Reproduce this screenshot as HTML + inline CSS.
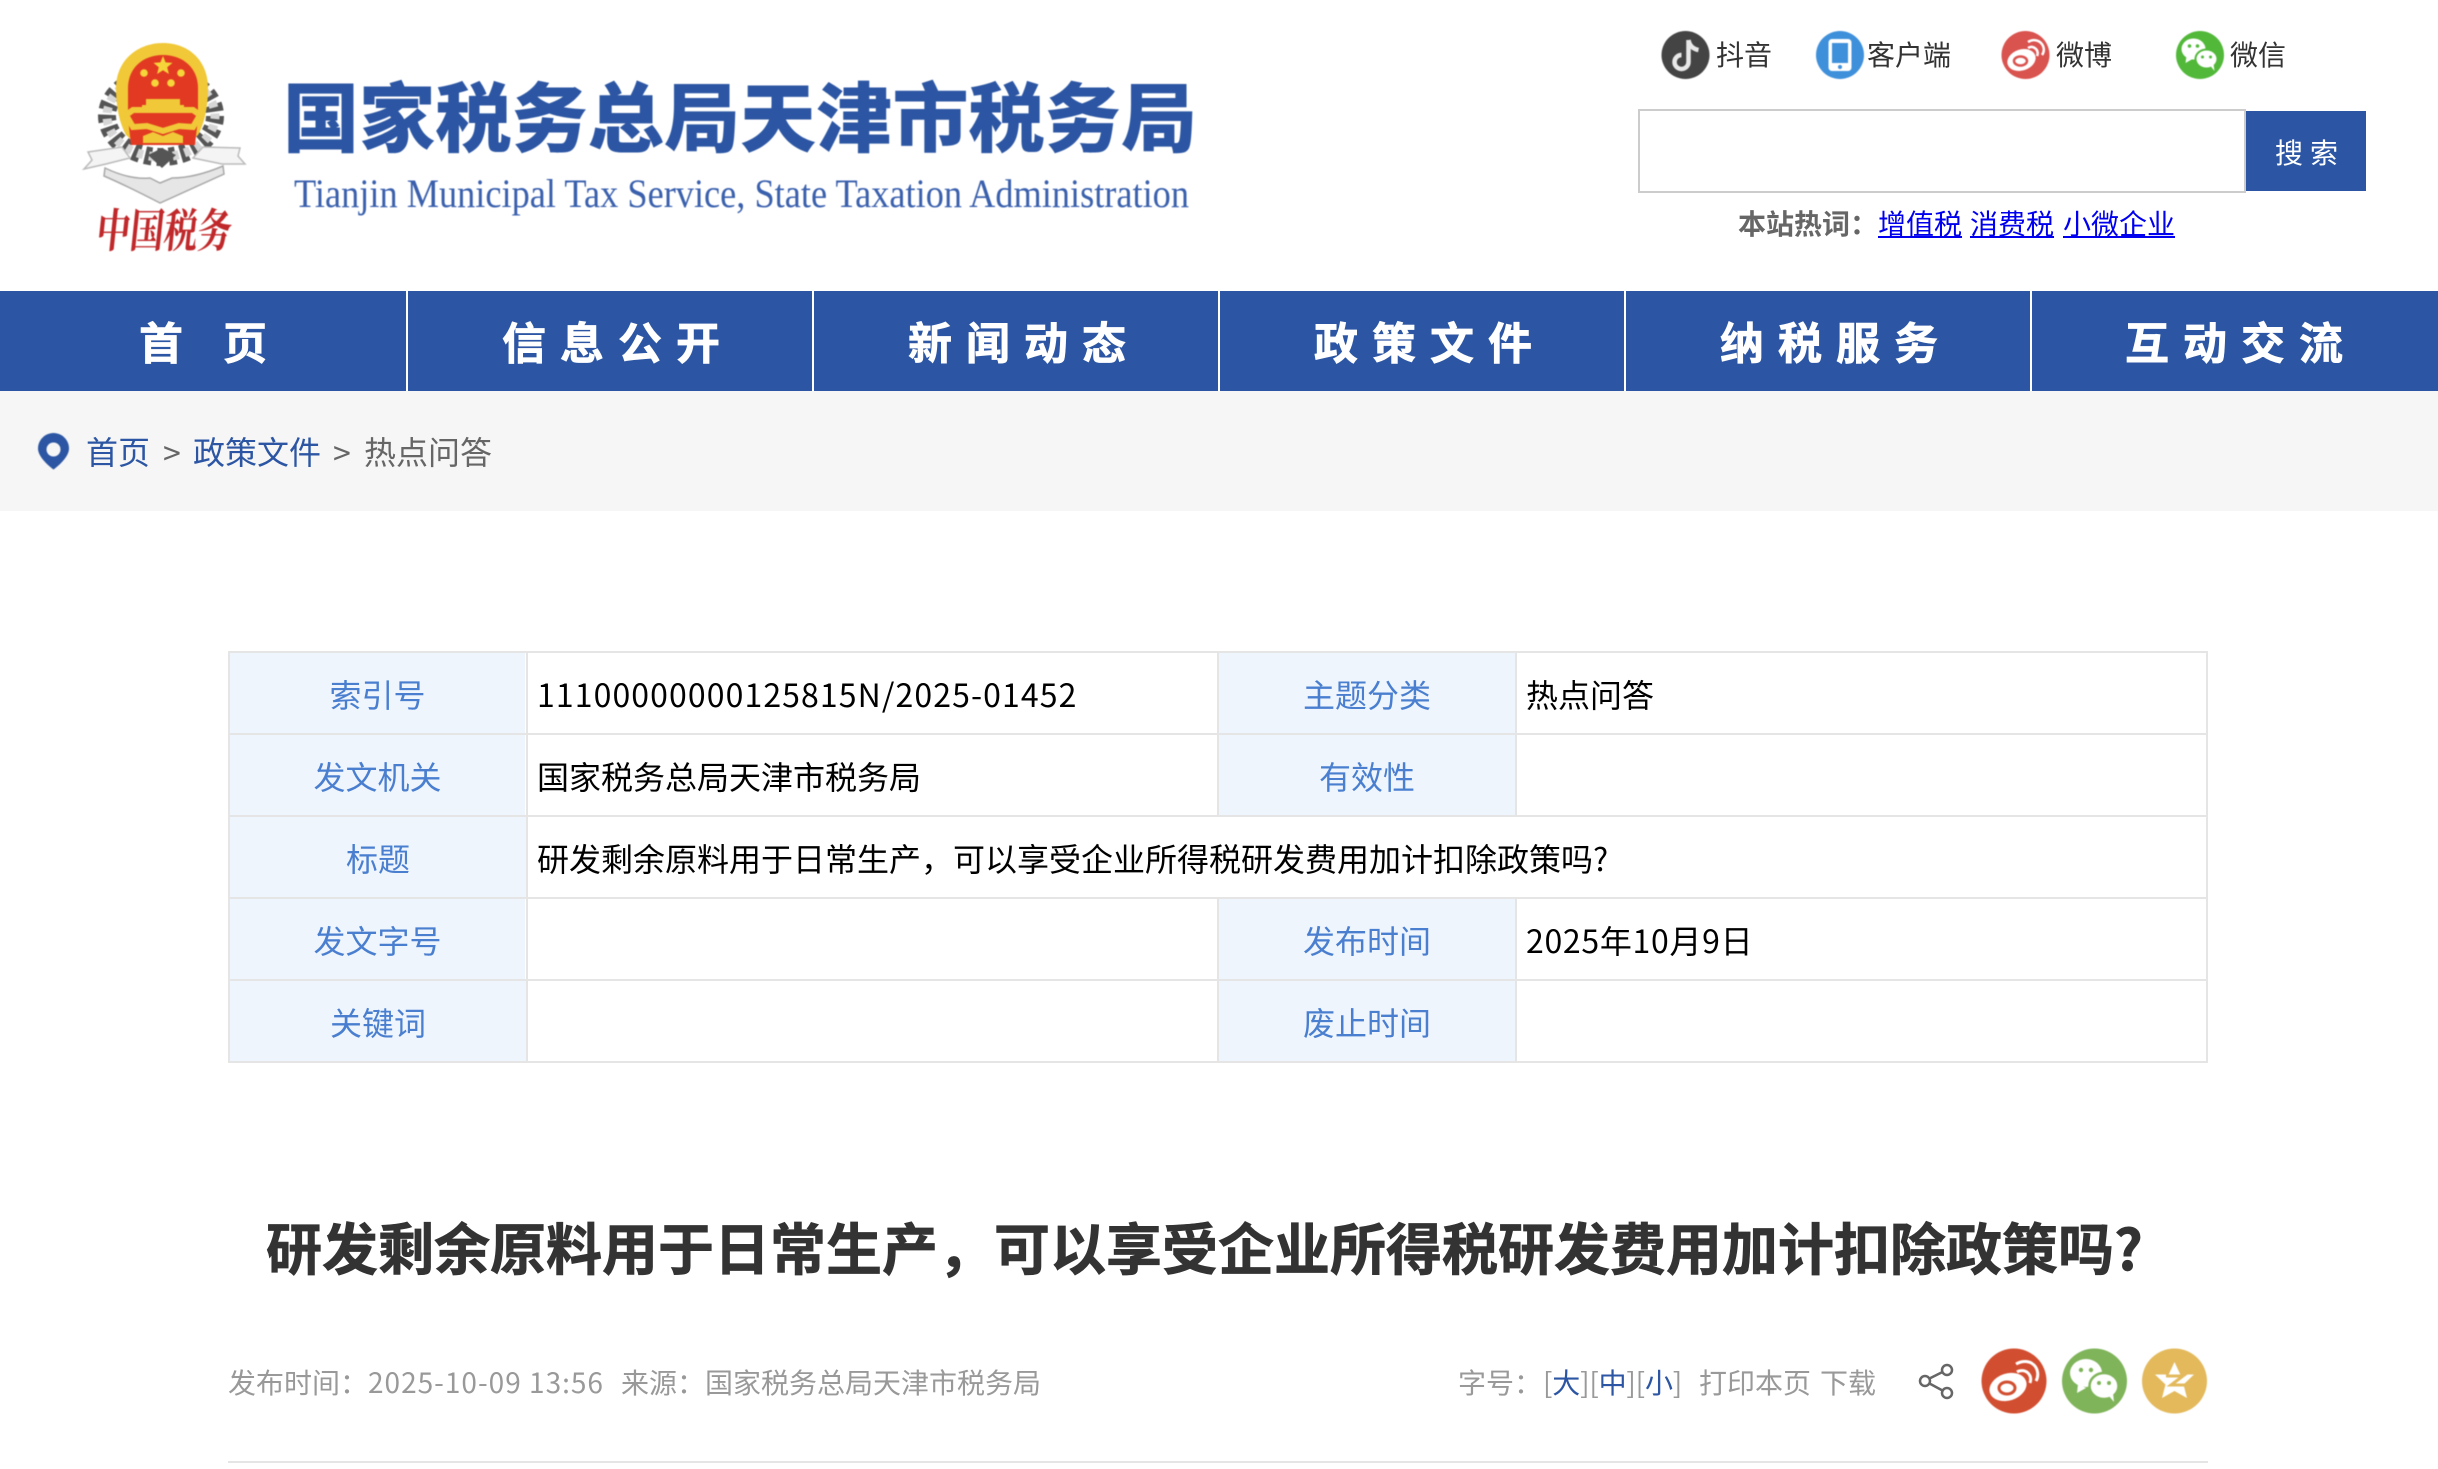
<!DOCTYPE html>
<html lang="zh-CN">
<head>
<meta charset="utf-8">
<title>研发剩余原料用于日常生产，可以享受企业所得税研发费用加计扣除政策吗?</title>
<style>
html,body{margin:0;padding:0;background:#fff}
body{position:relative;width:2438px;height:1469px;overflow:hidden;font-family:"Noto Sans CJK SC","Liberation Sans",sans-serif;color:#333}
.t{position:absolute;white-space:nowrap;line-height:1}
.box{position:absolute}
.nav{background:#2c56a3;top:291px;height:100px}
.n{color:#fff;font-size:44px;font-weight:700;top:318px;letter-spacing:14px;-webkit-text-stroke:.7px #fff}
.s{font-size:28px;top:40px;color:#333}
.k{background:#eff5fd;color:#4a7fd0;text-align:center;font-size:32px;line-height:82px;height:80px;position:absolute}
.v{color:#000;font-size:32px;line-height:82px;height:80px;position:absolute;white-space:nowrap}
.line{position:absolute;background:#e5e5e5}
a{color:#0000ee;text-decoration:underline}
.m{font-size:28px;top:1368px;color:#999}
svg{position:absolute;left:0;top:0}
</style>
</head>
<body>

<!-- logo -->
<svg width="1300" height="290" viewBox="0 0 1300 290" style="filter:blur(.6px)">
  <ellipse cx="161" cy="116" rx="54" ry="41" fill="none" stroke="#555" stroke-width="18" stroke-dasharray="7 5"/>
  <ellipse cx="161" cy="116" rx="54" ry="41" fill="none" stroke="#d6d6d6" stroke-width="9" stroke-dasharray="6 6" stroke-dashoffset="3"/>
  <path d="M88 152L122 147 130 158 106 164 84 169 92 160z" fill="#f4f4f4" stroke="#bbb" stroke-width="1.500"/>
  <path d="M240 148L203 147 193 158 222 164 245 164 238 156z" fill="#f4f4f4" stroke="#bbb" stroke-width="1.500"/>
  <path d="M105 168Q130 180 150 178L160 183 172 178Q195 178 223 166L224 174Q200 185 160 203 125 185 104 176z" fill="#e6e6e6" stroke="#aaa" stroke-width="1.500"/>
  <path d="M148 155l14 13 14-13-14-7z" fill="#555"/>
  <path d="M116 88c0-27 21-45 47-45s45 18 45 45c0 18-3 34-10 47l-11 10h-50l-11-10c-7-13-10-29-10-47z" fill="#f0c838"/>
  <path d="M128 88c0-20 15-33 35-33s35 13 35 33v30l-3 27h-64l-3-27z" fill="#e23a22"/>
  <path d="M163 56l2.600 6.400 6.900.5-5.300 4.400 1.700 6.700-5.900-3.700-5.900 3.700 1.700-6.700-5.300-4.400 6.900-.5z" fill="#f5d53a"/>
  <g fill="#f5d53a"><circle cx="144" cy="73" r="3.800"/><circle cx="181" cy="73" r="3.800"/><circle cx="155" cy="83" r="3.800"/><circle cx="171" cy="83" r="3.800"/></g>
  <path d="M146 99h34v6h4v5h-42v-5h4z" fill="#f0c838"/>
  <path d="M133 110h60l7 5-7 12-14-1-16 5-16-5-14 1-7-12z" fill="none" stroke="#f0c838" stroke-width="6"/>
  <path d="M143 136l10-4 10 4 10-4 10 4v7h-40z" fill="#f0c838"/>
  <text transform="translate(95,247) skewX(-6) scale(1,1.4)" font-family="'Noto Serif CJK SC',serif" font-weight="700" font-size="33" fill="#c0282a" textLength="135" lengthAdjust="spacingAndGlyphs">中国税务</text>
  <text x="283" y="146" font-family="'Noto Sans CJK SC',sans-serif" font-weight="900" font-size="76" fill="#2c56a3" textLength="914" lengthAdjust="spacingAndGlyphs">国家税务总局天津市税务局</text>
  <text x="294" y="207" font-family="'Liberation Serif',serif" font-size="40" fill="#3a60ad" textLength="895" lengthAdjust="spacingAndGlyphs">Tianjin Municipal Tax Service, State Taxation Administration</text>
</svg>

<!-- top icons -->
<svg width="2438" height="100" viewBox="0 0 2438 100" style="filter:blur(.5px)">
  <circle cx="1685.500" cy="55" r="24" fill="#444"/>
  <path d="M1688.500 40v22a7 7 0 1 1-7-7M1688.500 40c1 6 5 9 10 10" fill="none" stroke="#e8e8e8" stroke-width="4.500"/>
  <circle cx="1840" cy="55" r="24" fill="#3f90db"/>
  <rect x="1828.500" y="39" width="23" height="32" rx="3.500" fill="#fff"/>
  <rect x="1832" y="43" width="16" height="20" fill="#3f90db"/>
  <circle cx="1840" cy="67" r="2" fill="#3f90db"/>
  <circle cx="2025.500" cy="55" r="24" fill="#d9534f"/>
  <ellipse cx="2021.500" cy="60" rx="14.500" ry="10.500" fill="#fff" transform="rotate(-18 2021.500 60)"/>
  <ellipse cx="2020.500" cy="61" rx="6.500" ry="4.500" fill="none" stroke="#d9534f" stroke-width="2.500"/>
  <path d="M2028 42c5-3 10-2 13 1s4 8 1 12M2028 48c3-2 6-1 8 1s2 5 1 7" fill="none" stroke="#fff" stroke-width="2.500"/>
  <circle cx="2200" cy="55" r="24" fill="#52b83a"/>
  <ellipse cx="2193.500" cy="49" rx="12" ry="10.500" fill="#fff"/>
  <path d="M2186.500 56l-1 7 7-4z" fill="#fff"/>
  <ellipse cx="2206.500" cy="59" rx="11" ry="9.500" fill="#fff" stroke="#52b83a" stroke-width="2"/>
  <path d="M2210.500 66l4 5-1-7z" fill="#fff"/>
  <g fill="#52b83a"><circle cx="2189.500" cy="46" r="1.800"/><circle cx="2197.500" cy="46" r="1.800"/><circle cx="2202.500" cy="57" r="1.500"/><circle cx="2210.500" cy="57" r="1.500"/></g>
</svg>
<div class="t s" style="left:1716px">抖音</div>
<div class="t s" style="left:1867px">客户端</div>
<div class="t s" style="left:2056px">微博</div>
<div class="t s" style="left:2230px">微信</div>

<!-- search -->
<div class="box" style="left:1638px;top:109px;width:604px;height:80px;border:2px solid #ccc;background:#fff"></div>
<div class="box" style="left:2246px;top:111px;width:120px;height:80px;background:#2c56a3"></div>
<div class="t" style="left:2275px;top:138px;font-size:28px;color:#fff;letter-spacing:7px">搜索</div>
<div class="t" style="left:1738px;top:209px;font-size:28px;font-weight:700;color:#666">本站热词：</div>
<a class="t" href="#" style="left:1878px;top:209px;font-size:28px">增值税</a>
<a class="t" href="#" style="left:1970px;top:209px;font-size:28px">消费税</a>
<a class="t" href="#" style="left:2063px;top:209px;font-size:28px">小微企业</a>

<!-- nav -->
<div class="box nav" style="left:0;width:406px"></div>
<div class="box nav" style="left:408px;width:404px"></div>
<div class="box nav" style="left:814px;width:404px"></div>
<div class="box nav" style="left:1220px;width:404px"></div>
<div class="box nav" style="left:1626px;width:404px"></div>
<div class="box nav" style="left:2032px;width:406px"></div>
<div class="t n" style="left:139px">首</div>
<div class="t n" style="left:223px">页</div>
<div class="t n" style="left:502px">信息公开</div>
<div class="t n" style="left:908px">新闻动态</div>
<div class="t n" style="left:1314px">政策文件</div>
<div class="t n" style="left:1720px">纳税服务</div>
<div class="t n" style="left:2125px">互动交流</div>

<!-- breadcrumb -->
<div class="box" style="left:0;top:391px;width:2438px;height:120px;background:#f6f6f6"></div>
<svg width="100" height="500" viewBox="0 0 100 500" style="filter:blur(.4px)">
  <path d="M53.500 433c-8.500 0-15.500 7-15.500 15.500 0 8 10 17 15.500 21 5.500-4 15.500-13 15.500-21 0-8.500-7-15.500-15.500-15.500z" fill="#2c56a3"/>
  <circle cx="53.500" cy="449.500" r="7" fill="#f6f6f6"/>
</svg>
<div class="t" style="left:86px;top:435px;font-size:32px;color:#2c56a3">首页</div>
<div class="t" style="left:163px;top:436px;font-size:32px;color:#666">&gt;</div>
<div class="t" style="left:193px;top:435px;font-size:32px;color:#2c56a3">政策文件</div>
<div class="t" style="left:333px;top:436px;font-size:32px;color:#666">&gt;</div>
<div class="t" style="left:364px;top:435px;font-size:32px;color:#666">热点问答</div>

<!-- table -->
<div class="k" style="left:230px;top:653px;width:295px">索引号</div>
<div class="k" style="left:230px;top:735px;width:295px">发文机关</div>
<div class="k" style="left:230px;top:817px;width:296px">标题</div>
<div class="k" style="left:230px;top:899px;width:295px">发文字号</div>
<div class="k" style="left:230px;top:981px;width:296px">关键词</div>
<div class="k" style="left:1219px;top:653px;width:296px">主题分类</div>
<div class="k" style="left:1219px;top:735px;width:296px">有效性</div>
<div class="k" style="left:1219px;top:899px;width:296px">发布时间</div>
<div class="k" style="left:1219px;top:981px;width:296px">废止时间</div>
<div class="v" style="left:537px;top:653px;letter-spacing:1.1px">11100000000125815N/2025-01452</div>
<div class="v" style="left:537px;top:735px">国家税务总局天津市税务局</div>
<div class="v" style="left:537px;top:817px">研发剩余原料用于日常生产，可以享受企业所得税研发费用加计扣除政策吗?</div>
<div class="v" style="left:1526px;top:653px">热点问答</div>
<div class="v" style="left:1526px;top:899px;letter-spacing:.7px">2025年10月9日</div>
<div class="line" style="left:228px;top:651px;width:1980px;height:2px"></div>
<div class="line" style="left:228px;top:733px;width:1980px;height:2px"></div>
<div class="line" style="left:228px;top:815px;width:1980px;height:2px"></div>
<div class="line" style="left:228px;top:897px;width:1980px;height:2px"></div>
<div class="line" style="left:228px;top:979px;width:1980px;height:2px"></div>
<div class="line" style="left:228px;top:1061px;width:1980px;height:2px"></div>
<div class="line" style="left:228px;top:651px;width:2px;height:412px"></div>
<div class="line" style="left:526px;top:651px;width:2px;height:412px"></div>
<div class="line" style="left:2206px;top:651px;width:2px;height:412px"></div>
<div class="line" style="left:1217px;top:651px;width:2px;height:166px"></div>
<div class="line" style="left:1515px;top:651px;width:2px;height:166px"></div>
<div class="line" style="left:1217px;top:897px;width:2px;height:166px"></div>
<div class="line" style="left:1515px;top:897px;width:2px;height:166px"></div>

<!-- title -->
<div class="t" style="left:266px;top:1219px;font-size:56px;font-weight:700;color:#333;-webkit-text-stroke:.7px #333">研发剩余原料用于日常生产，可以享受企业所得税研发费用加计扣除政策吗?</div>

<!-- meta -->
<div class="t m" style="left:228px">发布时间：</div>
<div class="t m" style="left:368px;letter-spacing:1px">2025-10-09 13:56</div>
<div class="t m" style="left:621px">来源：</div>
<div class="t m" style="left:705px">国家税务总局天津市税务局</div>
<div class="t m" style="left:1458px">字号：</div>
<div class="t m" style="left:1543px;letter-spacing:-.2px">[<span style="color:#2c56a3">大</span>][<span style="color:#2c56a3">中</span>][<span style="color:#2c56a3">小</span>]</div>
<div class="t m" style="left:1699px">打印本页</div>
<div class="t m" style="left:1820px">下载</div>

<!-- share icons -->
<svg width="2438" height="1469" viewBox="0 0 2438 1469">
  <g fill="none" stroke="#666" stroke-width="2.500">
    <circle cx="1925" cy="1381" r="5"/><circle cx="1947" cy="1370" r="5"/><circle cx="1947" cy="1393" r="5"/>
    <path d="M1929.500 1378.500l13-6.500M1929.500 1383.500l13 7"/>
  </g>
  <g style="filter:blur(.5px)">
    <circle cx="2014" cy="1381" r="32.500" fill="#d24e30"/>
    <ellipse cx="2008" cy="1387" rx="19" ry="13.500" fill="#fff" transform="rotate(-18 2008 1387)"/>
    <ellipse cx="2007" cy="1388" rx="8" ry="6" fill="none" stroke="#d24e30" stroke-width="3"/>
    <path d="M2016 1364c7-4 14-3 18 1s5 11 2 16M2017 1372c3-2 8-2 11 1s3 7 2 10" fill="none" stroke="#fff" stroke-width="3"/>
    <circle cx="2094.500" cy="1381" r="32.500" fill="#7fb45a"/>
    <ellipse cx="2086" cy="1373" rx="16" ry="14" fill="#fff"/>
    <path d="M2078 1384l-1 9 9-5z" fill="#fff"/>
    <ellipse cx="2104" cy="1386" rx="14.500" ry="13" fill="#fff" stroke="#7fb45a" stroke-width="2.500"/>
    <path d="M2109 1396l5 6-1-9z" fill="#fff"/>
    <g fill="#7fb45a"><circle cx="2081" cy="1370" r="2.200"/><circle cx="2091" cy="1370" r="2.200"/><circle cx="2099" cy="1383" r="2"/><circle cx="2109" cy="1383" r="2"/></g>
    <circle cx="2174.500" cy="1381" r="32.500" fill="#e3b95c"/>
    <path d="M2174.500 1362l5.800 12.500h13.700l-10.500 10 3.500 13.500-12.500-7-12.500 7 3.500-13.500-10.500-10h13.700z" fill="#fff"/>
    <path d="M2166 1376h17l-12 9h14" fill="none" stroke="#e3b95c" stroke-width="3"/>
  </g>
</svg>
<div class="line" style="left:228px;top:1461px;width:1980px;height:2px"></div>

</body>
</html>
